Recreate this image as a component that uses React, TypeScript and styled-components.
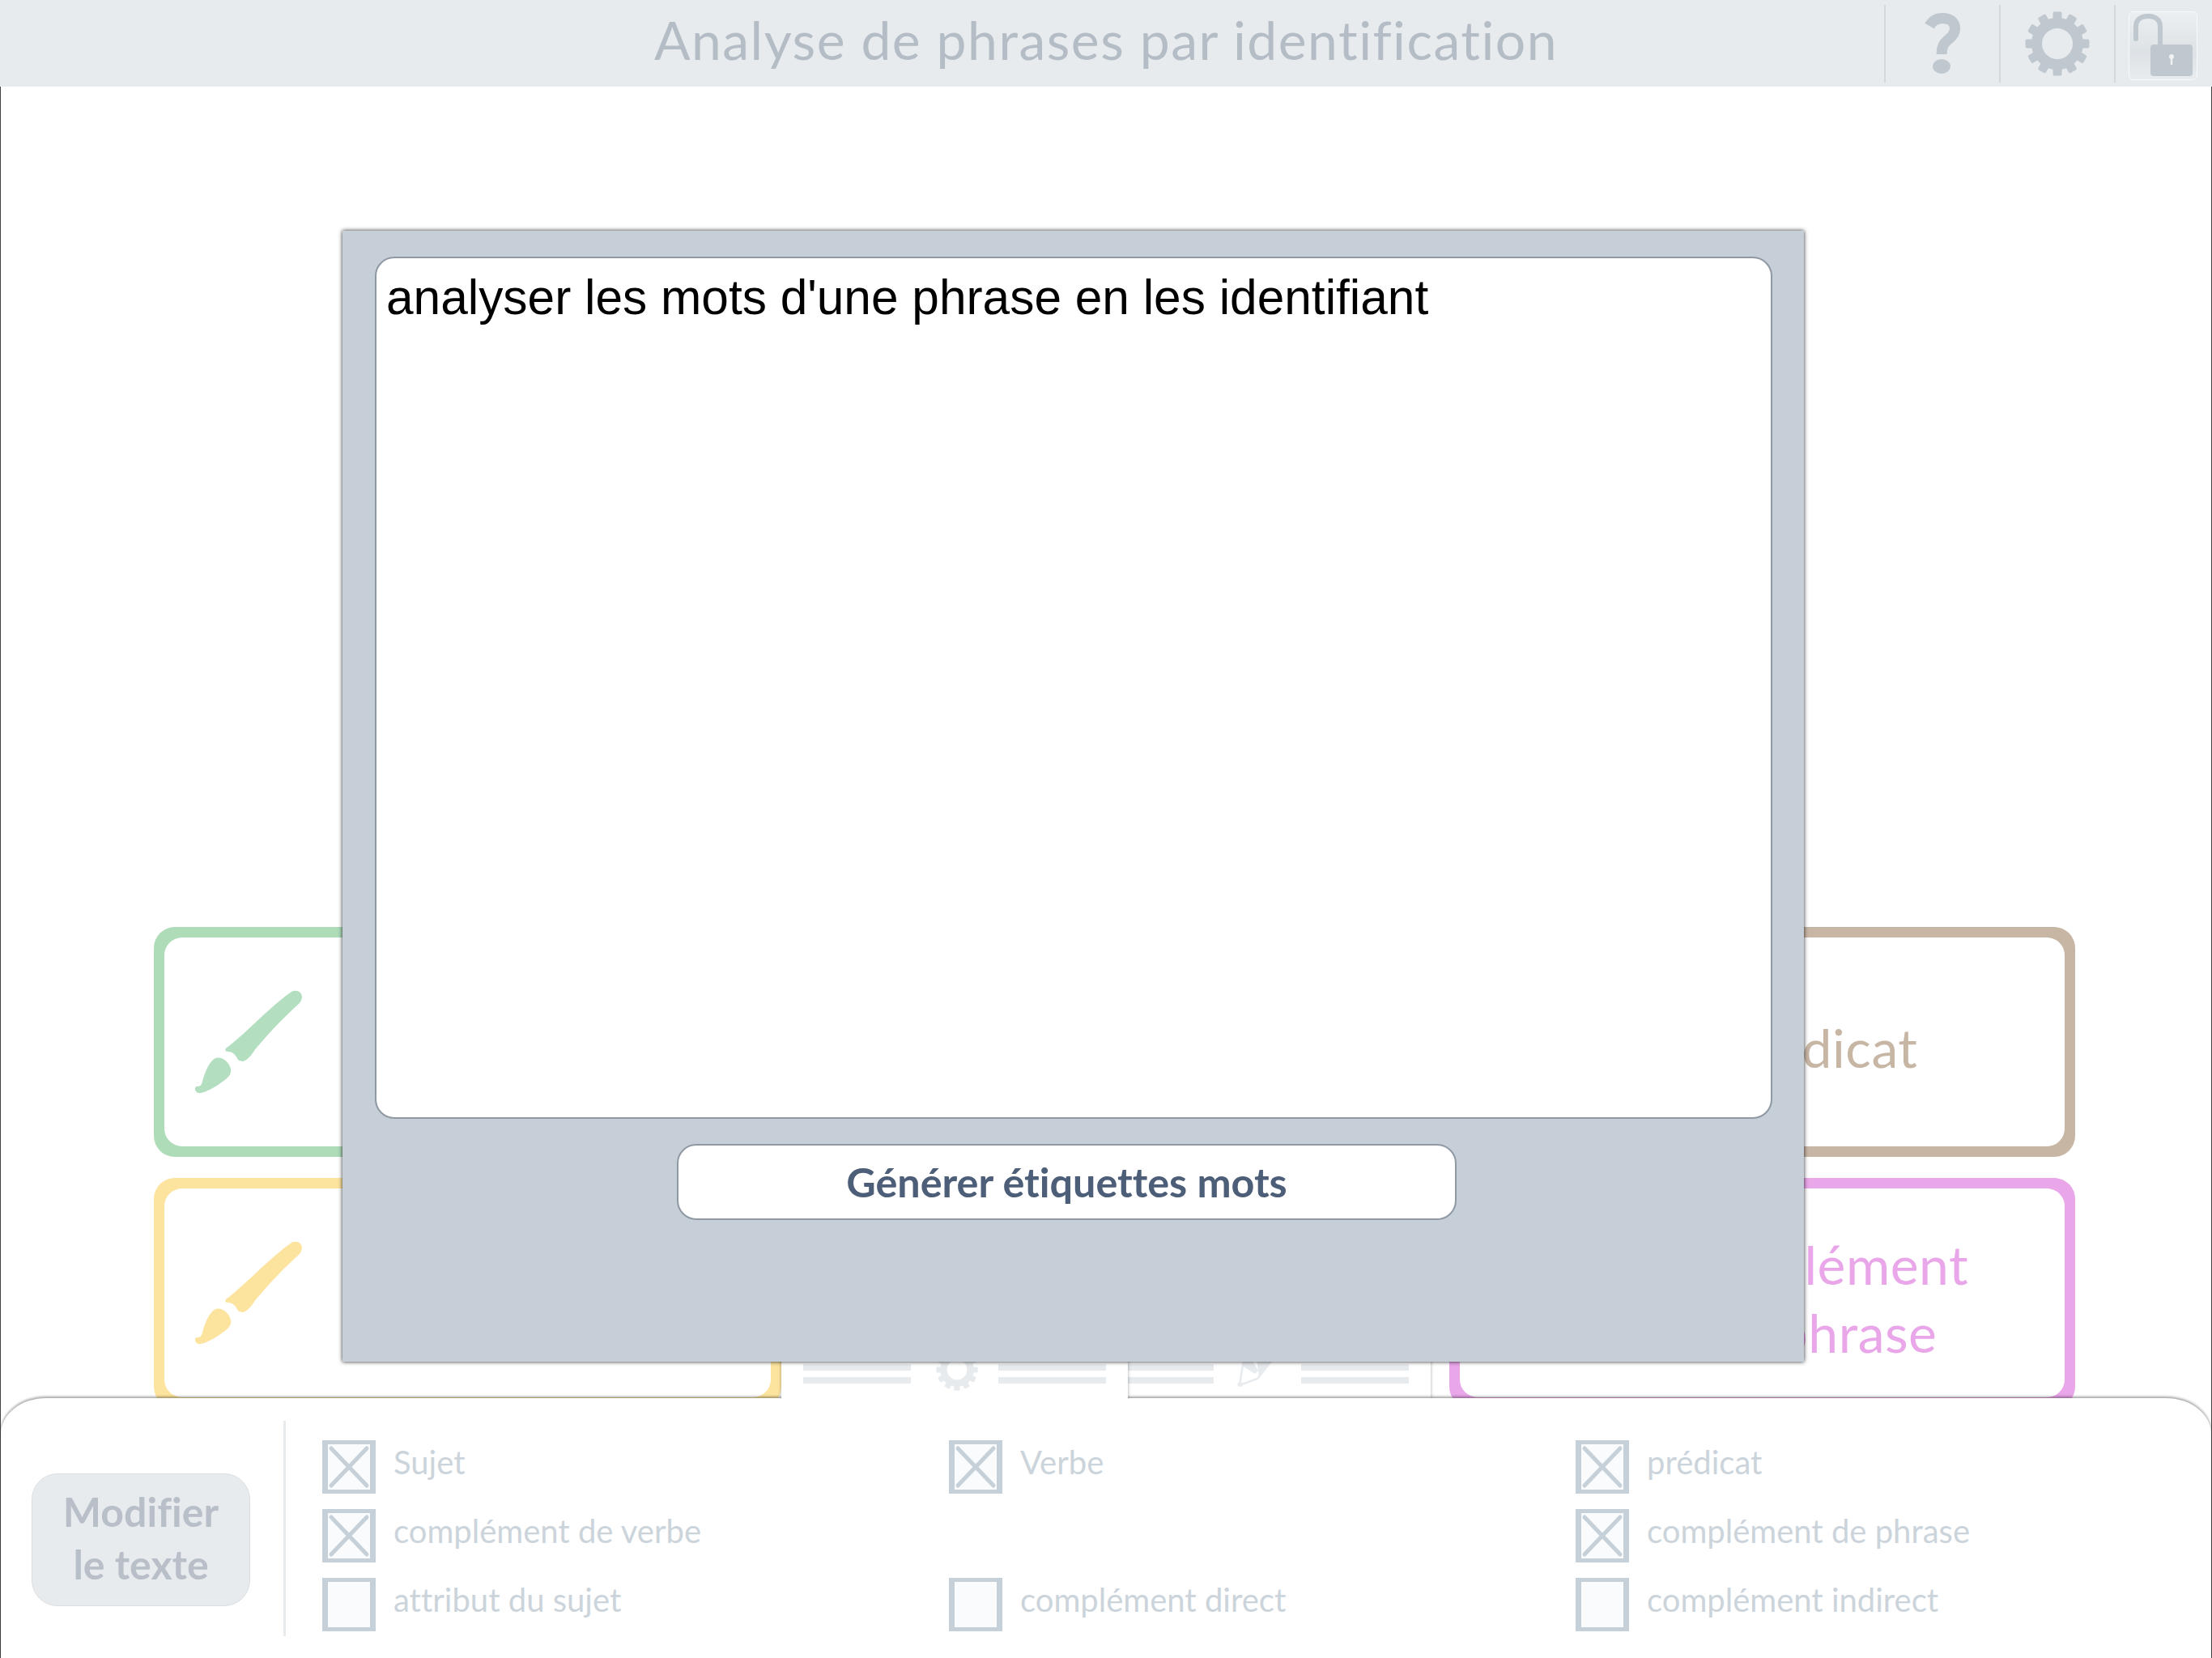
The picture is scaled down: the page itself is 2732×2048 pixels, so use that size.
import React, { FC } from 'react';
import styled, { createGlobalStyle } from 'styled-components';

const GlobalStyle = createGlobalStyle`
	html, body {
		margin: 0;
		padding: 0;
		background: #ffffff;
	}
`;

const Screen = styled.div`
	position: relative;
	width: 2732px;
	height: 2048px;
	display: flex;
	flex-direction: column;
	overflow: hidden;
	background: #ffffff;
	font-family: Lato, 'Liberation Sans', sans-serif;
	font-variant-ligatures: none;
`;

const Header = styled.header`
	height: 107px;
	flex: none;
	display: grid;
	grid-template-columns: 405px 1fr 405px;
	align-items: center;
	background: #e7ebee;
`;

const Title = styled.h1`
	grid-column: 2;
	margin: -9px 0 0;
	font-size: 66px;
	font-weight: 400;
	letter-spacing: 1.5px;
	line-height: 100px;
	text-align: center;
	white-space: nowrap;
	color: #b4bcc6;
`;

const HeaderTools = styled.div`
	grid-column: 3;
	display: flex;
	justify-self: end;
	height: 96px;
	margin-top: 1px;
`;

const ToolCell = styled.div<{ $wide?: boolean }>`
	width: ${(p) => (p.$wide ? '121px' : '142px')};
	display: flex;
	align-items: center;
	justify-content: ${(p) => (p.$wide ? 'flex-start' : 'center')};
	border-left: 2px solid #d4d8db;
	box-sizing: border-box;
`;

const LockButton = styled.div`
	width: 85px;
	height: 85px;
	margin-left: 16px;
	margin-top: 4px;
	border: 1px solid #f8f9fa;
	border-radius: 6px;
	box-sizing: border-box;
	background: linear-gradient(#eceff1 0%, #dde2e6 60%, #e9ecef 100%);
`;

const Page = styled.div`
	flex: 1;
	min-height: 0;
	display: flex;
	flex-direction: column;
	border-left: 1px solid #444444;
	border-right: 1px solid #444444;
`;

const Board = styled.main`
	flex: 1;
	min-height: 0;
	display: grid;
	grid-template-columns: 775px 825px 773px;
	grid-template-rows: 284px 284px;
	row-gap: 26px;
	align-content: start;
	padding: 1038px 0 0 189px;
`;

const Card = styled.div<{ $color: string; $column: number }>`
	grid-column: ${(p) => p.$column};
	display: flex;
	height: 284px;
	padding: 13px;
	box-sizing: border-box;
	border-radius: 26px;
	background: ${(p) => p.$color};
	color: ${(p) => p.$color};
`;

const CardFace = styled.div`
	flex: 1;
	display: flex;
	align-items: center;
	border-radius: 22px;
	background: #ffffff;
`;

const BrushSlot = styled.div`
	width: 145px;
	flex: none;
	padding-left: 35px;
	box-sizing: border-box;
`;

const CardLabel = styled.div`
	flex: 1;
	padding-top: 13px;
	font-size: 66px;
	letter-spacing: 0.5px;
	line-height: 84px;
	text-align: center;
`;

const TabRow = styled.div`
	grid-column: 2;
	display: flex;
	padding-right: 23px;
`;

const Tab = styled.div<{ $active?: boolean }>`
	position: relative;
	z-index: ${(p) => (p.$active ? 2 : 0)};
	margin-left: ${(p) => (p.$active ? 0 : '-54px')};
	width: 428px;
	height: 273px;
	flex: none;
	display: flex;
	align-items: flex-end;
	justify-content: center;
	padding-bottom: 19px;
	box-sizing: border-box;
	background: #ffffff;
	box-shadow: 0 0 4px rgba(0, 0, 0, 0.35);
	clip-path: inset(-6px -6px 0 -6px);
`;

const TabBars = styled.div`
	width: 133px;
	flex: none;
	display: flex;
	flex-direction: column;
	gap: 8px;
`;

const TabBar = styled.div`
	height: 8px;
	background: #e7ebee;
`;

const TabIcon = styled.div<{ $drop: number; $nudge?: number }>`
	width: 108px;
	flex: none;
	display: flex;
	justify-content: center;
	box-sizing: border-box;
	padding-left: ${(p) => p.$nudge ?? 0}px;
	margin-bottom: ${(p) => -p.$drop}px;
`;

const BottomPanel = styled.section`
	position: relative;
	z-index: 1;
	height: 321px;
	flex: none;
	display: flex;
	align-items: flex-start;
	padding-top: 28px;
	box-sizing: border-box;
	background: #ffffff;
	border-radius: 56px 56px 0 0 / 44px 44px 0 0;
	box-shadow: 0 -2px 3px rgba(0, 0, 0, 0.35);
`;

const EditButton = styled.div`
	width: 270px;
	height: 164px;
	flex: none;
	margin: 65px 0 0 38px;
	padding-bottom: 4px;
	display: flex;
	align-items: center;
	justify-content: center;
	box-sizing: border-box;
	border: 1px solid #dcdfe2;
	border-radius: 32px;
	background: #e7ebee;
	font-size: 50px;
	font-weight: 700;
	line-height: 65px;
	text-align: center;
	color: #b8bfc9;
`;

const PanelDivider = styled.div`
	width: 3px;
	height: 266px;
	flex: none;
	margin-left: 41px;
	background: #e7ebee;
`;

const Options = styled.div`
	flex: 1;
	display: grid;
	grid-template-columns: repeat(3, 774px);
	grid-auto-rows: 66px;
	row-gap: 19px;
	margin: 24px 0 0 45px;
`;

const Option = styled.div`
	display: flex;
	align-items: flex-start;
	gap: 22px;
	font-size: 40px;
	line-height: 54px;
	color: #ccd4db;
`;

const CheckBox = styled.div`
	width: 66px;
	height: 66px;
	flex: none;
	box-sizing: border-box;
	border-style: solid;
	border-color: #c6d0d8;
	border-width: 5px 7px;
	background: #f9fbfc;
`;

const Dialog = styled.div`
	position: absolute;
	z-index: 3;
	left: 423px;
	top: 285px;
	width: 1805px;
	height: 1397px;
	display: flex;
	flex-direction: column;
	gap: 31px;
	padding: 32px 39px 0 40px;
	box-sizing: border-box;
	background: #c6ced8;
	box-shadow: 0 0 5px rgba(0, 0, 0, 0.85);
`;

const TextInput = styled.textarea`
	height: 1065px;
	flex: none;
	padding: 13px 12px;
	box-sizing: border-box;
	border: 2px solid #8f99a3;
	border-radius: 24px;
	outline: none;
	resize: none;
	background: #ffffff;
	font-family: 'Liberation Sans', Arial, sans-serif;
	font-size: 60.4px;
	line-height: 70px;
	color: #000000;
`;

const GenerateButton = styled.button`
	width: 963px;
	height: 94px;
	flex: none;
	margin-left: 373px;
	padding: 0 0 2px;
	border: 2px solid #8f99a3;
	border-radius: 24px;
	background: #ffffff;
	font-family: Lato, 'Liberation Sans', sans-serif;
	font-variant-ligatures: none;
	font-size: 50.3px;
	font-weight: 700;
	color: #4d5e78;
`;

const Brush: FC<{ color: string }> = ({ color }) => (
	<svg width="137" height="133" viewBox="0 0 137 133" fill={color} style={{ display: 'block' }}>
		<path d="M122 4C126 2 131 2.500 133.500 6C136 9.500 135 14 132 18C112 36 95 54 79 73C74 79 70 88 62 90L57 89C54 85 52 80 47 78.500L41 77.500C39.500 76 41 73 43 72.500C67 54 96 22 122 4Z" />
		<path d="M30 85.500C37 84.500 45 91 47 99C48 105 45 109 42 111C35 117 25 124 14 128C10 129.500 6 130 4 127C2 125 3 121 5 121C8 121.500 11 120 12 115C14 106 21 87 30 85.500Z" />
	</svg>
);

const Gear: FC<{ size: number; color: string }> = ({ size, color }) => (
	<svg width={size} height={size} viewBox="0 0 80 80" style={{ display: 'block' }}>
		{Array.from({ length: 12 }, (_, i) => (
			<rect key={i} x="34.500" y="0.500" width="11" height="16" rx="2" fill={color} transform={`rotate(${i * 30} 40 40)`} />
		))}
		<circle cx="40" cy="40" r="25.500" fill="none" stroke={color} strokeWidth="13" />
	</svg>
);

const QuestionMark = () => (
	<svg width="44" height="76" viewBox="0 0 44 76" style={{ display: 'block' }}>
		<path d="M6 16C10 9 16 6.500 22 6.500C31 6.500 37.500 11 37.500 19C37.500 26 33 30 28 34C24 37 21 41 21 51" fill="none" stroke="#bfc7cf" strokeWidth="13" />
		<ellipse cx="21" cy="66" rx="11" ry="9" fill="#bfc7cf" />
	</svg>
);

const OpenLock = () => (
	<svg width="83" height="83" viewBox="0 0 83 83" style={{ display: 'block' }}>
		<path d="M8 33V18C8 9 14 5 23 5C32 5 38 9 38 18V42" fill="none" stroke="#bfc7cf" strokeWidth="6" strokeLinecap="round" />
		<rect x="26" y="40" width="52" height="39" rx="4" fill="#bfc7cf" />
		<circle cx="52" cy="55" r="3" fill="#f0f2f4" />
		<rect x="50.800" y="55" width="2.400" height="10" fill="#f0f2f4" />
	</svg>
);

const Pencil = () => (
	<svg width="50" height="48" viewBox="0 0 50 48" style={{ display: 'block' }}>
		<path d="M8 12L18 12L26 26L22 30L6 20Z M24 12L44 12L27 34Z" fill="#e7ebee" />
		<path d="M3 44L8 12M3 44L25 36L44 12" fill="none" stroke="#e7ebee" strokeWidth="2.500" />
		<circle cx="3.500" cy="43" r="3" fill="#e7ebee" />
	</svg>
);

const Cross = () => (
	<svg width="52" height="56" viewBox="0 0 52 56" style={{ display: 'block' }}>
		<path d="M4 5L48 51M48 5L4 51" stroke="#c6d0d8" strokeWidth="5" strokeLinecap="round" />
	</svg>
);

type OptionItem = { label: string; checked: boolean } | null;

const options: OptionItem[] = [
	{ label: 'Sujet', checked: true },
	{ label: 'Verbe', checked: true },
	{ label: 'prédicat', checked: true },
	{ label: 'complément de verbe', checked: true },
	null,
	{ label: 'complément de phrase', checked: true },
	{ label: 'attribut du sujet', checked: false },
	{ label: 'complément direct', checked: false },
	{ label: 'complément indirect', checked: false }
];

const App: FC = () => (
	<Screen>
		<GlobalStyle />
		<Header>
			<Title>Analyse de phrases par identification</Title>
			<HeaderTools>
				<ToolCell>
					<QuestionMark />
				</ToolCell>
				<ToolCell>
					<Gear size={80} color="#bfc7cf" />
				</ToolCell>
				<ToolCell $wide>
					<LockButton>
						<OpenLock />
					</LockButton>
				</ToolCell>
			</HeaderTools>
		</Header>
		<Page>
			<Board>
				<Card $color="#aedcb9" $column={1}>
					<CardFace>
						<BrushSlot>
							<Brush color="#b3dfc0" />
						</BrushSlot>
					</CardFace>
				</Card>
				<Card $color="#c8b6a5" $column={3}>
					<CardFace>
						<BrushSlot />
						<CardLabel>prédicat</CardLabel>
					</CardFace>
				</Card>
				<Card $color="#fde49e" $column={1}>
					<CardFace>
						<BrushSlot>
							<Brush color="#fde49e" />
						</BrushSlot>
					</CardFace>
				</Card>
				<TabRow>
					<Tab $active>
						<TabBars>
							<TabBar />
							<TabBar />
						</TabBars>
						<TabIcon $drop={9} $nudge={6}>
							<Gear size={52} color="#e7ebee" />
						</TabIcon>
						<TabBars>
							<TabBar />
							<TabBar />
						</TabBars>
					</Tab>
					<Tab>
						<TabBars>
							<TabBar />
							<TabBar />
						</TabBars>
						<TabIcon $drop={6}>
							<Pencil />
						</TabIcon>
						<TabBars>
							<TabBar />
							<TabBar />
						</TabBars>
					</Tab>
				</TabRow>
				<Card $color="#e9a6e9" $column={3}>
					<CardFace>
						<BrushSlot />
						<CardLabel>
							complément
							<br />
							de phrase
						</CardLabel>
					</CardFace>
				</Card>
			</Board>
			<BottomPanel>
				<EditButton>
					Modifier
					<br />
					le texte
				</EditButton>
				<PanelDivider />
				<Options>
					{options.map((item, i) =>
						item ? (
							<Option key={item.label}>
								<CheckBox>{item.checked && <Cross />}</CheckBox>
								{item.label}
							</Option>
						) : (
							<div key={i} />
						)
					)}
				</Options>
			</BottomPanel>
		</Page>
		<Dialog>
			<TextInput defaultValue="analyser les mots d'une phrase en les identifiant" />
			<GenerateButton>Générer étiquettes mots</GenerateButton>
		</Dialog>
	</Screen>
);

export default App;
